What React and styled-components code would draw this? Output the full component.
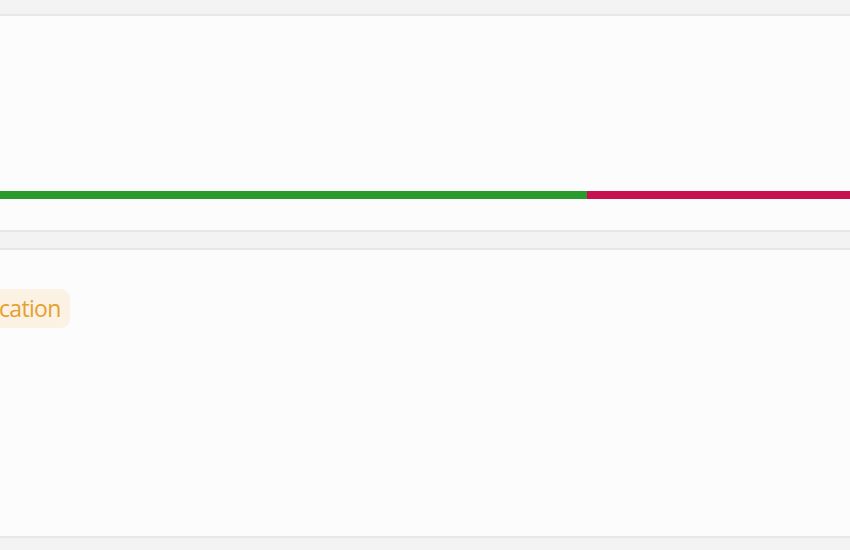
import React from "react";
import styled, { createGlobalStyle } from "styled-components";

const Global = createGlobalStyle`
  html, body { margin: 0; padding: 0; background: #f3f3f3; overflow: hidden; }
  body { font-family: "Open Sans", "Liberation Sans", sans-serif; }
`;

const Page = styled.div`
  width: 850px;
  height: 550px;
  padding-top: 14px;
  box-sizing: border-box;
  display: flex;
  flex-direction: column;
  gap: 16px;
  overflow: hidden;
`;

const Panel = styled.section`
  margin: 0 -12px;
  height: ${(p) => p.$h}px;
  box-sizing: border-box;
  background: #fcfcfc;
  border-top: 2px solid #e9e6e6;
  border-bottom: 2px solid #e9e6e6;
  display: flex;
  flex-direction: column;
`;

const BarTrack = styled.div`
  margin-top: 174.5px;
  height: 8px;
  display: flex;
`;

const Segment = styled.div`
  height: 100%;
  background: ${(p) => p.$color};
  width: ${(p) => p.$w}px;
  flex: ${(p) => (p.$grow ? 1 : "none")};
`;

const TagRow = styled.div`
  margin-top: 39px;
  display: flex;
`;

const Tag = styled.span`
  display: inline-flex;
  align-items: center;
  height: 39px;
  box-sizing: border-box;
  padding: 0 9px 1px 20px;
  margin-left: -9px;
  border-radius: 9px;
  background: #fbf2e4;
  color: #e6a030;
  font-family: "Open Sans", "Liberation Sans", sans-serif;
  font-size: 23px;
  font-weight: 500;
  letter-spacing: -0.7px;
`;

export default function App() {
  return (
    <>
      <Global />
      <Page>
        <Panel $h={218}>
          <BarTrack>
            <Segment $color="#289b2c" $w={599} />
            <Segment $color="#c7104f" $grow />
          </BarTrack>
        </Panel>
        <Panel $h={290}>
          <TagRow>
            <Tag>cation</Tag>
          </TagRow>
        </Panel>
      </Page>
    </>
  );
}
